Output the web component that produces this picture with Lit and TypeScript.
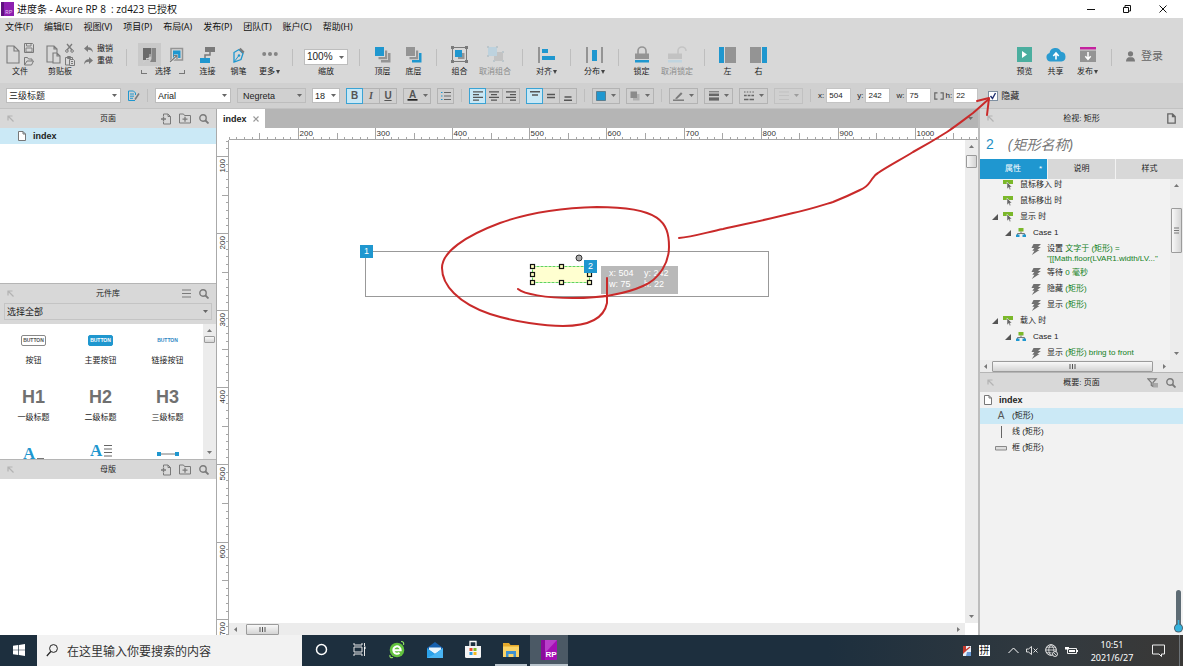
import { LitElement, html, svg, css, TemplateResult } from "lit";
import { customElement, property, state } from "lit/decorators.js";

const icon = (w: number, h: number, body: unknown) =>
  html`<svg class="ico" width=${w} height=${h} viewBox="0 0 ${w} ${h}" aria-hidden="true">${body}</svg>`;

const G = "#7a7a7a";
const M = "#949494";
const B = "#1f97cf";

const icons = {
  file: () => icon(14, 19, svg`<path d="M1 1h7l5 5v12H1z M8 1v5h5" fill="none" stroke=${G} stroke-width="1.1"/>`),
  save: () => icon(10, 10, svg`<path d="M.5 .5h8l1 1v8h-9z" fill="none" stroke=${G}/><path d="M2.500 .5h4.500v2.500h-4.500z M2 5h6v4H2z" fill="none" stroke=${G} stroke-width=".9"/>`),
  open: () => icon(10, 10, svg`<path d="M.5 9V1.500h3l1 1.500H8v2M.5 9 3 5h6.500L7.500 9z" fill="none" stroke=${G}/>`),
  paste: () => icon(15, 19, svg`<path d="M7 17H1V1h7l3 3v4M8 1v3h3M7 8h4l3 3v7H7z M11 8v3h3" fill="none" stroke=${G} stroke-width="1.1"/>`),
  cut: () => icon(9, 10, svg`<path d="M2 1l5 6M7 1 2 7" stroke=${G} stroke-width="1.3"/><circle cx="1.900" cy="8" r="1.300" fill="none" stroke=${G}/><circle cx="7.100" cy="8" r="1.300" fill="none" stroke=${G}/>`),
  copy: () => icon(10, 10, svg`<path d="M4 9H.5V1.500h7V3M2.500 .5h3v2h-3z M4.500 3.500h4l1 1v5h-5z M6 5.500h2M6 7.500h2" fill="none" stroke=${G}/>`),
  undo: () => icon(9, 8, svg`<path d="M0 3.500 4 0v2.200c3 0 4.500 1.500 5 5.300C7.800 5.500 6.500 4.800 4 4.800V7z" fill=${G}/>`),
  redo: () => icon(9, 8, svg`<path d="M9 3.500 5 0v2.200C2 2.200 .5 3.700 0 7.500 1.200 5.500 2.500 4.800 5 4.800V7z" fill=${G}/>`),
  selIntersect: () => icon(15, 16, svg`<path d="M1 1h8v8L6 13H1z" fill="#6a6a6a"/><path d="M9.500 1H14v14H8l1.500-3z" fill="#858585"/><path d="M8 7v4.500H4M8 10l-7 5.500" fill="none" stroke="#cfcfcf" stroke-width="1"/>`),
  selContain: () => icon(15, 16, svg`<path d="M2 1.500h11.500V13H2z" fill="none" stroke=${M} stroke-width="1.500"/><path d="M4 3.500h7.500V11H4z" fill=${B}/><path d="M5 8.500h3v3M8 8.500l-7 7" fill="none" stroke="#ececec" stroke-width="2.200"/><path d="M4.500 8.500h3.500V12M8 8.500 1 15" fill="none" stroke=${G} stroke-width="1.200"/>`),
  connect: () => icon(16, 16, svg`<path d="M5 0h10v5H5z" fill=${G}/><path d="M0 11h10v5H0z" fill=${B}/><path d="M10 5v3H5v3" fill="none" stroke=${G} stroke-width="1.500"/>`),
  pen: () => icon(13, 16, svg`<path d="M2 5.500 7 2.500l4 4-2 6-7 2.500z" fill="none" stroke=${B} stroke-width="1.300"/><path d="M7 2.500 8.500 .8l4 4L11 6.500z" fill=${G}/><path d="M2 15l4.500-6" stroke=${B}/><circle cx="7" cy="8.500" r="1.200" fill=${B}/>`),
  more: () => icon(16, 16, svg`<circle cx="2.200" cy="7" r="2" fill="#858585"/><circle cx="8" cy="7" r="2" fill="#858585"/><circle cx="13.800" cy="7" r="2" fill="#858585"/>`),
  front: () => icon(16, 16, svg`<path d="M13 6v7H6v2.500h9.500V6z" fill=${M}/><path d="M10 3.500V10H3.500v2.200h8.700V3.500z" fill=${M}/><path d="M0 0h9v9H0z" fill=${B}/>`),
  back: () => icon(16, 16, svg`<path d="M13 6v7H6v2.500h9.500V6z" fill=${B}/><path d="M10 3.500V10H3.500v2.200h8.700V3.500z" fill=${M}/><path d="M0 0h9v9H0z" fill=${M}/>`),
  group: () => icon(17, 17, svg`<path d="M1.500 1.500h14v14h-14z" fill="none" stroke=${G}/><path d="M8 7h5.500v6H7V8z" fill=${M}/><path d="M4 4h7v7H4z" fill=${B}/><path d="M0 0h3v3H0zM14 0h3v3h-3zM0 14h3v3H0zM14 14h3v3h-3z" fill=${G}/>`),
  ungroup: () => icon(17, 17, svg`<path d="M7 6h9v9H7z" fill="#c3c3c3"/><path d="M1 1h9v9H1z" fill="#bdd2de"/><path d="M0 0h2v2H0zM9 0h2v2H9zM0 9h2v2H0zM15 5h2v2h-2zM15 14h2v2h-2zM6 14h2v2H6z" fill="#bcc6cb"/>`),
  alignT: () => icon(17, 16, svg`<path d="M0 0h2v16H0z" fill=${M}/><path d="M4 2h6v4H4zM4 9h13v4H4z" fill=${B}/>`),
  distribute: () => icon(17, 16, svg`<path d="M0 0h2v16H0zM15 0h2v16h-2z" fill=${M}/><path d="M6 3h5v11H6z" fill=${B}/>`),
  lock: () => icon(14, 17, svg`<path d="M3 8V5a4 4 0 0 1 8 0v3" fill="none" stroke=${M} stroke-width="1.600"/><path d="M0 7.500h14V13H0z" fill=${M}/><path d="M0 14h14v2.500H0z" fill=${B}/>`),
  unlock: () => icon(19, 17, svg`<path d="M10 8V5a4 4 0 0 1 8 0" fill="none" stroke="#c4c4c4" stroke-width="1.600"/><path d="M0 7.500h14V13H0z" fill="#c2c2c2"/><path d="M0 14h14v2.500H0z" fill="#c0d4df"/>`),
  paneL: () => icon(17, 16, svg`<path d="M0 0h5v16H0z" fill=${B}/><path d="M6 0h11v16H6z" fill=${M}/>`),
  paneR: () => icon(17, 16, svg`<path d="M12 0h5v16h-5z" fill=${B}/><path d="M0 0h11v16H0z" fill=${M}/>`),
  preview: () => icon(15, 15, svg`<path d="M0 0h15v15H0z" fill="#4bae9f"/><path d="M5 4v7l5-3.500z" fill="#fff"/>`),
  share: () => icon(20, 15, svg`<path d="M4.500 14.500a4.300 4.300 0 0 1-1-8.400 6 6 0 0 1 11.500-1.300 4.900 4.900 0 0 1 .5 9.700z" fill="#2a9bd0"/><path d="M10 12.500V6.500M7.300 9 10 6l2.700 3" fill="none" stroke="#fff" stroke-width="1.600"/>`),
  publish: () => icon(16, 15, svg`<path d="M0 0h16v2.500H0z" fill="#c4229f"/><path d="M0 3.500h16V15H0z" fill=${M}/><path d="M8 5v7M5.300 9.300 8 12.300l2.700-3" fill="none" stroke="#fff" stroke-width="1.500"/>`),
  person: () => icon(9, 11, svg`<circle cx="4.500" cy="2.800" r="2.600" fill=${G}/><path d="M0 10.500C0 7.500 1.500 6.500 2.500 6.200h4C7.500 6.500 9 7.500 9 10.500z" fill=${G}/>`),
  styleEdit: () => icon(13, 12, svg`<path d="M1.500 1h5l2 2v2M1.500 1v9.500H8" fill="none" stroke=${B}/><path d="M3 4h4M3 6.200h4M3 8.300h3" stroke=${B}/><path d="M12 3.500 8 9.500" stroke=${G} stroke-width="1.500"/>`),
  fontColor: () => icon(11, 11, svg`<text x="5.500" y="8" text-anchor="middle" font-size="10" font-weight="bold" fill="#555">A</text><path d="M.5 9h10v1.700H.5z" fill="#222"/>`),
  bullets: () => icon(10, 8, svg`<path d="M0 .5h1.500M0 4h1.500M0 7.500h1.500" stroke=${B} stroke-width="1.200"/><path d="M3 .5h7M3 4h7M3 7.500h7" stroke="#666"/>`),
  hL: () => icon(10, 10, svg`<path d="M0 .8h10M0 3.600h6M0 6.400h10M0 9.200h6" stroke="#555" stroke-width="1.300"/>`),
  hC: () => icon(10, 10, svg`<path d="M0 .8h10M2 3.600h6M0 6.400h10M2 9.200h6" stroke="#555" stroke-width="1.300"/>`),
  hR: () => icon(10, 10, svg`<path d="M0 .8h10M4 3.600h6M0 6.400h10M4 9.200h6" stroke="#555" stroke-width="1.300"/>`),
  vT: () => icon(10, 10, svg`<path d="M0 .8h10M2 4h6" stroke="#555" stroke-width="1.400"/>`),
  vM: () => icon(10, 10, svg`<path d="M1 3.500h8M1 6.500h8" stroke="#555" stroke-width="1.400"/>`),
  vB: () => icon(10, 10, svg`<path d="M1.500 6h7M1 9.200h8" stroke="#555" stroke-width="1.400"/>`),
  fill: () => icon(10, 10, svg`<path d="M.5 .5h9v9h-9z" fill=${B} stroke="#5b7f91"/>`),
  shadow: () => icon(10, 10, svg`<path d="M3 3h6.500v6.500H3z" fill="#b0b0b0"/><path d="M.5 .5h6.500v6.500H.5z" fill="#8b8b8b"/>`),
  line: () => icon(11, 10, svg`<path d="M2 7.500 8 1.200 9.500 2.700 4 8z" fill=${G}/><path d="M0 9.200h11" stroke=${G} stroke-width="1.500"/>`),
  weight: () => icon(10, 10, svg`<path d="M0 .8h10" stroke="#666"/><path d="M0 3.800h10" stroke="#666" stroke-width="2.500"/><path d="M0 8h10" stroke="#666" stroke-width="3.200"/>`),
  dash: () => icon(10, 10, svg`<path d="M0 1h10" stroke="#666" stroke-dasharray="1.500 1.300"/><path d="M0 4.500h10" stroke="#666" stroke-width="1.400" stroke-dasharray="2.700 1"/><path d="M0 8.500h10" stroke="#666" stroke-width="1.500" stroke-dasharray="4.500 1"/>`),
  arrows: () => icon(10, 10, svg`<path d="M0 1h10M0 4.500h10M0 8.500h10" stroke="#b5b5b5"/>`),
  lockRatio: () => icon(10, 8, svg`<path d="M3.500 .8H.8v6.400h2.700M6.500 .8h2.700v6.400H6.500" fill="none" stroke="#666" stroke-width="1.200"/>`),
  pin: () => icon(7, 7, svg`<path d="M1 5.500V1h4.500M1 1l5.500 5.500" fill="none" stroke="#b3b3b3" stroke-width="1.200"/>`),
  addPage: () => icon(10, 12, svg`<path d="M2.500 3V1h4.500l2.500 2.500V11H2.500V9M7 1v2.500h2.500" fill="none" stroke=${G}/><path d="M0 6h5M2.500 3.500v5" stroke=${G} stroke-width="1.300"/>`),
  addFolder: () => icon(12, 11, svg`<path d="M.5 1h4l1 1.500h6V10H.5z" fill="none" stroke=${G}/><path d="M3.500 6.200h5M6 3.700v5" stroke=${G} stroke-width="1.300"/>`),
  search: () => icon(10, 10, svg`<circle cx="4" cy="4" r="3.200" fill="none" stroke=${G} stroke-width="1.400"/><path d="M6.500 6.500 9.500 9.500" stroke=${G} stroke-width="1.800"/>`),
  menu: () => icon(9, 9, svg`<path d="M0 1h9M0 4.500h9M0 8h9" stroke=${G} stroke-width="1.200"/>`),
  page: () => icon(8, 10, svg`<path d="M.5 .5h4.500l2.500 2.500v6.500h-7z M5 .5V3h2.500" fill="#fff" stroke="#777"/>`),
  pageTool: () => icon(9, 11, svg`<path d="M.8 .8h4.700l2.700 2.700v6.700H.8z M5.500 .8v2.700h2.700" fill="none" stroke="#666" stroke-width="1.300"/>`),
  filter: () => icon(11, 10, svg`<path d="M.8 .8h8.400L6 4.500V8.500L4.300 7.500v-3z" fill="none" stroke=${G} stroke-width="1.200"/><path d="M8 5v4.500M10 5v4.500" stroke=${G}/>`),
  tri: () => icon(6, 6, svg`<path d="M6 0v6H0z" fill="#555"/>`),
  event: () => icon(10, 10, svg`<path d="M0 0h10v4H0z" fill="#7bb82a"/><path d="M4 2v7l1.700-1.500 1 2.300 1.200-.5-1-2.300H9z" fill="#666" stroke="#f2f2f2" stroke-width=".5"/>`),
  case: () => icon(10, 10, svg`<path d="M2.500 0h5v3.500h-5z" fill="#7bb82a"/><path d="M5 3.500v2M1.500 7V5.500h7V7" fill="none" stroke="#777"/><path d="M0 6.500h3.500V9H0zM6.500 6.500H10V9H6.500z" fill=${B}/>`),
  bolt: () => icon(10, 11, svg`<path d="M2.500 0H10L7 3h2.800L6.300 6h2.200L.8 11l2.700-4.300H1.300L3.300 4H.5z" fill="#707070"/>`),
};

const caret = () => icon(5, 3, svg`<path d="M0 0h5L2.500 3z" fill="#6b6b6b"/>`);
const arrow = (d: "u" | "d" | "l" | "r") =>
  icon(5, 5, svg`<path d=${{ u: "M0 4h5L2.500 1z", d: "M0 1h5L2.500 4z", l: "M4 0v5L1 2.500z", r: "M1 0v5l3-2.500z" }[d]} fill="#777"/>`);

/** Ruler of the drawing canvas: one labelled mark for each hundred units. */
@customElement("canvas-ruler")
export class CanvasRuler extends LitElement {
  @property({ type: Boolean }) vertical = false;
  @property({ type: Number }) origin = 0;
  @property({ type: Number }) from = 0;
  @state() private extent = 0;

  private watcher = new ResizeObserver(() => {
    this.extent = this.vertical ? this.clientHeight : this.clientWidth;
  });

  connectedCallback() {
    super.connectedCallback();
    this.watcher.observe(this);
  }

  disconnectedCallback() {
    this.watcher.disconnect();
    super.disconnectedCallback();
  }

  static styles = css`
    :host { display: block; overflow: hidden; background: #fff; min-width: 0; min-height: 0; }
    svg { display: block; width: 100%; height: 100%; font: 8px "Liberation Sans", Arial, sans-serif; }
    line { stroke: #a6a6a6; }
    text { fill: #333; }
  `;

  render() {
    const step = 7.71;
    const start = this.vertical ? 0 : 12;
    const out: unknown[] = [];
    for (let i = -20; this.origin + i * step < this.extent; i++) {
      const p = Math.round(this.origin + i * step) + 0.5;
      if (p < start) continue;
      const mod = ((i % 10) + 10) % 10;
      const len = mod === 0 ? 12 : mod === 5 ? 7 : 3;
      out.push(this.vertical
        ? svg`<line x1=${12 - len} x2="12" y1=${p} y2=${p}></line>`
        : svg`<line y1=${12 - len} y2="12" x1=${p} x2=${p}></line>`);
      if (mod === 0 && i >= 0) {
        const label = this.from + i * 10;
        out.push(this.vertical
          ? svg`<text transform="translate(8 ${p + 16}) rotate(-90)">${label}</text>`
          : svg`<text x=${p + 1} y="8">${label}</text>`);
      }
    }
    return html`<svg>${out}${this.vertical
      ? svg`<line x1="11.500" x2="11.500" y1="0" y2=${this.extent}></line>`
      : svg`<line y1="11.500" y2="11.500" x1="12" x2=${this.extent}></line>`}</svg>`;
  }
}

@customElement("app-root")
export class AppRoot extends LitElement {
  static styles = css`
    :host {
      display: flex; flex-direction: column; position: relative; height: 100vh; overflow: hidden;
      font: 8px/12px "Liberation Sans", "Noto Sans CJK SC", sans-serif; color: #222; background: #d8d8d8;
    }
    * { box-sizing: border-box; }
    button, input, select { font: inherit; color: inherit; margin: 0; padding: 0; border: 0; background: none; border-radius: 0; }
    button { display: flex; align-items: center; justify-content: center; }
    .ico { display: block; flex: none; }
    .grow { flex: 1; }

    .title { display: flex; align-items: center; height: 18px; flex: none; background: #fff; padding: 0 2px 0 1px; color: #111; font: 10px/18px "Open Sans", "Noto Sans CJK SC", sans-serif; white-space: pre; }
    .title h1 { font: inherit; margin: 0 0 0 3px; flex: 1; }
    .title .win { width: 36px; height: 18px; }
    .menu { display: flex; height: 18px; flex: none; align-items: center; gap: 11px; padding-left: 5px; font: 9px/18px "Noto Sans", "Noto Sans CJK SC", sans-serif; color: #111; }

    .tools { display: flex; height: 47px; flex: none; align-items: flex-start; padding-top: 7px; }
    .sep { width: 1px; height: 17px; background: #bebebe; margin: 6px 7px 0; flex: none; }
    .tool { display: flex; flex-direction: column; align-items: center; justify-content: flex-start; width: 31px; flex: none; white-space: nowrap; color: #222; }
    .tool.wide { width: 40px; }
    .tool.mid { width: 33px; }
    .tool .art { display: flex; height: 23px; align-items: center; justify-content: center; }
    .tool .cap { display: flex; align-items: center; gap: 1px; line-height: 12px; }
    .off { color: #8a8a8a; }
    .pair { display: flex; gap: 4px; align-items: center; }
    .stack { display: flex; flex-direction: column; gap: 3px; }
    .files { display: flex; width: 119px; flex: none; }
    .files > .tool { width: 40px; }
    .hist { display: flex; flex-direction: column; padding-left: 4px; }
    .hist button { gap: 4px; height: 12px; }
    .selectors { display: flex; flex-direction: column; width: 58px; flex: none; align-items: center; }
    .modes { display: flex; gap: 4px; }
    .modes button { width: 23px; height: 23px; }
    .modes .on { background: #c9c9c9; }
    .brk { display: flex; align-items: center; gap: 8px; }
    .brk i { width: 6px; height: 4px; border: solid #777; border-width: 0 0 1px 1px; }
    .brk i:last-child { border-width: 0 1px 1px 0; }
    .zoom { display: flex; flex-direction: column; align-items: center; width: 52px; flex: none; gap: 1px; padding-top: 6px; }
    .zoom select { width: 44px; height: 16px; font-size: 10px; }
    select {
      appearance: none; background: #fff url("data:image/svg+xml,%3Csvg xmlns='http://www.w3.org/2000/svg' width='5' height='3'%3E%3Cpath d='M0 0h5L2.500 3z' fill='%23666'/%3E%3C/svg%3E") no-repeat right 3px center;
      border: 1px solid #bdbdbd; padding: 0 10px 0 2px; height: 15px;
    }
    .login { gap: 6px; font-size: 11px; color: #666; padding: 7px 20px 0 7px; }

    .format { display: flex; height: 25px; flex: none; align-items: center; gap: 6px; padding-left: 6px; background: #d0d0d0; font-size: 9px; }
    .format > * { flex: none; }
    .format .sep { height: 13px; margin: 0 1px; }
    .format .s1 { width: 115px; }
    .format .s2 { width: 76px; }
    .format .s3 { width: 69px; background-color: #d0d0d0; padding-left: 5px; }
    .format .s4 { width: 28px; }
    .seg { display: flex; }
    .seg button, .fb { width: 17px; height: 16px; border: 1px solid #b3b3b3; }
    .seg button + button { border-left: 0; }
    .seg button.on { background: #c8e8f6; border: 1px solid #3aa3d4; }
    .fb.drop { width: 28px; gap: 5px; }
    .fb.long { width: 29px; gap: 5px; }
    .fb:disabled { opacity: .5; }
    .b { font-weight: bold; font-size: 10px; color: #555; }
    .i { font: italic bold 10px "Liberation Serif", serif; color: #555; }
    .u { text-decoration: underline; font-weight: bold; font-size: 10px; color: #555; }
    .field { display: flex; align-items: center; gap: 2px; font-size: 8px; }
    .field.ratio { gap: 1px; margin-left: -3px; }
    .field input { width: 25px; height: 15px; background: #fff; border: 1px solid #c4c4c4; padding-left: 2px; }
    .hide { display: flex; align-items: center; gap: 3px; padding-left: 4px; }
    .hide input { appearance: none; width: 10px; height: 10px; border: 1px solid #7f8fa0; background: #fff url("data:image/svg+xml,%3Csvg xmlns='http://www.w3.org/2000/svg' width='8' height='8'%3E%3Cpath d='M1.500 4l2 2.500L6.500 1' fill='none' stroke='%23203070' stroke-width='1.400'/%3E%3C/svg%3E") no-repeat center; }

    main { display: grid; grid-template-columns: 216px minmax(0, 1fr) 205px; flex: 1; min-height: 0; border-top: 1px solid #c2c2c2; }
    .left, .right { display: flex; flex-direction: column; min-height: 0; background: #fff; }
    .right { background: #f2f2f2; border-left: 2px solid #bdbdbd; }
    .ph { display: grid; grid-template-columns: 48px 1fr 48px; align-items: center; height: 19px; flex: none; background: #d8d8d8; padding: 0 7px; }
    .ph h2 { margin: 0; font: inherit; text-align: center; }
    .ph .acts { display: flex; gap: 8px; justify-content: flex-end; align-items: center; }
    .ph.top { border-top: 1px solid #b5b5b5; height: 20px; }
    .row { display: flex; align-items: center; height: 16px; gap: 7px; flex: none; white-space: nowrap; }
    .row.sel { background: #cbe9f6; }
    .row b { font-size: 9px; }
    .pages { height: 155px; flex: none; }
    .pages .row { padding-left: 18px; }
    .lib { background: #d8d8d8; padding: 0 4px 4px; flex: none; }
    .lib select { width: 100%; height: 17px; background-color: #d8d8d8; font-size: 9px; border-color: #c4c4c4; }
    .kit { display: flex; height: 135px; flex: none; min-height: 0; }
    .kit ul { display: grid; grid-template-columns: repeat(3, 1fr); grid-auto-rows: 57px; flex: 1; list-style: none; margin: 0; padding: 4px 2px 0 0; overflow: hidden; }
    .kit li { display: flex; flex-direction: column; align-items: center; }
    .kit .pic { display: flex; height: 24px; align-items: center; justify-content: center; flex: none; }
    .kit .pic.high { height: 18px; }
    .kit .cap { padding-top: 3px; }
    .btn { font-weight: bold; font-size: 5px; line-height: 9px; border: 1px solid #888; border-radius: 2px; padding: 0 1px; color: #555; }
    .btn.prime { background: #1f97cf; border-color: #1f97cf; color: #fff; }
    .btn.link { border-color: transparent; color: #2f86c4; }
    .h { font-weight: bold; font-size: 18px; color: #707070; }
    .letter { font: bold 17px "Liberation Serif", "Times New Roman", serif; }

    .vbar { display: flex; flex-direction: column; align-items: center; justify-content: space-between; width: 13px; flex: none; background: #ececec; padding: 4px 0; }
    .vbar .head, .hbar .head { display: flex; align-items: center; }
    .vbar .head { flex-direction: column; gap: 3px; }
    .vbar .head.low { gap: 6px; }
    .vbar .head.deep { gap: 20px; }
    .hbar { display: flex; align-items: center; justify-content: space-between; height: 12px; flex: none; background: #ececec; padding: 0 4px; }
    .hbar .head { gap: 8px; }
    .hbar.inset { padding: 0 16px 0 3px; }
    .hbar.inset .head { gap: 4px; }
    .thumb { display: flex; align-items: center; justify-content: center; background: linear-gradient(#f8f8f8, #d4d4d4); border: 1px solid #9b9b9b; border-radius: 1px; width: 11px; }
    .thumb.side { background: linear-gradient(90deg, #f8f8f8, #d4d4d4); }
    .thumb.t7 { height: 7px; } .thumb.t13 { height: 13px; } .thumb.t45 { height: 45px; }
    .thumb.w33 { width: 33px; height: 11px; } .thumb.w160 { width: 161px; height: 11px; }

    .center { display: grid; grid-template-columns: 12px minmax(0, 1fr) 13px; grid-template-rows: 19px 12px minmax(0, 1fr) 12px; border-left: 1px solid #aaa; min-height: 0; background: #fff; }
    .tabs { grid-column: 1 / -1; display: flex; background: #b5b5b5; align-items: center; justify-content: space-between; padding-right: 5px; }
    .tabs .tab { display: flex; align-items: center; gap: 6px; height: 19px; padding: 0 6px; background: #fff; font-size: 9px; }
    .rh { grid-column: 1 / -1; }
    .rv { grid-row: 3 / 5; }
    .canvas { position: relative; overflow: hidden; background: #fff; font-size: 9px; line-height: 11px; }
    .canvas > * { position: absolute; }
    .frame { left: 136px; top: 111px; width: 404px; height: 46px; border: 1px solid #999; }
    .pick { left: 302px; top: 125px; overflow: visible; }
    .note { width: 13px; height: 13px; background: #1f97cf; color: #fff; font-size: 9px; line-height: 13px; text-align: center; }
    .n1 { left: 131px; top: 105px; } .n2 { left: 355px; top: 120px; }
    .tip { left: 372px; top: 126px; width: 77px; height: 28px; padding: 2px 8px; background: #b9b9b9; color: #fff; display: grid; grid-template-columns: 35px 1fr; grid-auto-rows: 11px; white-space: nowrap; }

    .name { display: flex; align-items: center; height: 31px; flex: none; background: #fff; padding-left: 6px; gap: 14px; font-size: 14px; color: #1f8fc4; }
    .name input { font-style: italic; color: #777; width: 120px; font-size: 14px; }
    .ptabs { display: grid; grid-template-columns: repeat(3, 1fr); gap: 1px; height: 20px; flex: none; background: #f2f2f2; }
    .ptabs button { background: #d8d8d8; gap: 18px; }
    .ptabs .on { background: #1f97d0; color: #fff; padding-left: 20px; }
    .tree { display: flex; height: 181px; flex: none; overflow: hidden; }
    .list { flex: 1; min-width: 0; overflow: hidden; display: flex; flex-direction: column; margin-top: -2px; }
    .list .row { gap: 7px; }
    .ev { padding-left: 12px; } .ev .ico + .ico { margin-left: -2px; }
    .ev.leaf { padding-left: 23px; }
    .cs { padding-left: 25px; } .cs .ico + .ico { margin-left: -2px; }
    .row.ac { padding-left: 51px; gap: 6px; align-items: center; }
    .row.two { height: 24px; align-items: flex-start; line-height: 10px; padding-top: 3px; }
    .g { color: #11801b; }
    .outline .row { padding-left: 15px; gap: 5px; }
    .outline .row.root { padding-left: 4px; gap: 7px; }
    .glyph { width: 12px; display: flex; justify-content: center; font-size: 10px; color: #555; }

    .taskbar { display: flex; height: 31px; flex: none; background: linear-gradient(90deg, #1d2f3e 0%, #1d2f3e 70%, #333a3f 90%, #3a3836 100%); color: #fff; align-items: stretch; }
    .taskbar button { width: 38px; flex: none; border-bottom: 2px solid transparent; }
    .taskbar button.start { width: 37px; }
    .taskbar button.run { border-color: #b9c4cc; width: 32px; margin: 0 3px; }
    .taskbar button.now { background: #4b5965; border-color: #b9c4cc; }
    .find { display: flex; align-items: center; gap: 9px; width: 265px; flex: none; background: #f2f2f2; padding-left: 9px; }
    .find input { flex: 1; min-width: 0; font: 12px/20px "Noto Sans CJK SC", sans-serif; }
    .find input::placeholder { color: #333; opacity: 1; }
    .tray { display: flex; align-items: center; gap: 7px; padding-right: 3px; }
    .ime { width: 11px; height: 11px; background: #fff; color: #111; line-height: 11px; font-size: 10px; text-align: center; margin-right: 11px; }
    .clock { font: 9px/13px "Noto Sans", sans-serif; text-align: center; width: 54px; margin-right: 6px; }
    .edge { width: 1px; align-self: stretch; background: #6c7277; margin-left: 7px; }
    .ink { position: absolute; left: 0; top: 0; width: 100%; height: 100%; pointer-events: none; }
    .gauge { position: absolute; right: 0; bottom: 32px; }
  `;

  private tool(art: TemplateResult, cap: string, cls = "", drop = false) {
    return html`<button class="tool ${cls}"><span class="art">${art}</span><span class="cap">${cap}${drop ? icon(4, 4, svg`<path d="M0 0h4L2 4z" fill="#444"/>`) : ""}</span></button>`;
  }

  private head(title: string, acts: unknown, cls = "") {
    return html`<header class="ph ${cls}">${icons.pin()}<h2>${title}</h2><div class="acts">${acts}</div></header>`;
  }

  private grip(vertical = false) {
    return vertical
      ? icon(5, 7, svg`<path d="M0 1h5M0 3.500h5M0 6h5" stroke="#777"/>`)
      : icon(7, 5, svg`<path d="M1 0v5M3.500 0v5M6 0v5" stroke="#555"/>`);
  }

  private handles() {
    const pts = [[0, 0], [29, 0], [0, 8], [57, 8], [0, 16], [29, 16], [57, 16]];
    return html`<svg class="pick" width="60" height="20" viewBox="0 0 60 20">
      <path d="M1.500 1.500h57v16h-57z" fill="#ffffd0" stroke="#5fd35f" stroke-dasharray="3 1"/>
      ${pts.map(([x, y]) => svg`<rect x=${x - 0.5} y=${y - 0.5} width="4" height="4" fill="#ffffc0" stroke="#111" stroke-width="1.200"/>`)}
      <circle cx="48" cy="-7" r="3" fill="#aaa" stroke="#333"/>
    </svg>`;
  }

  render() {
    const menu = ["文件(F)", "编辑(E)", "视图(V)", "项目(P)", "布局(A)", "发布(P)", "团队(T)", "账户(C)", "帮助(H)"];
    const addActs = html`${icons.addPage()}${icons.addFolder()}${icons.search()}`;
    const sep = html`<span class="sep"></span>`;
    return html`
      <header class="title">
        ${icon(13, 14, svg`<rect width="13" height="14" fill="#8c1fb0"/><rect width="3" height="14" fill="#5f1280"/><text x="4" y="12" font-size="6" fill="#e9c8f5">RP</text>`)}
        <h1>进度条 - Axure RP 8  : zd423 已授权</h1>
        <button class="win" aria-label="最小化">${icon(8, 8, svg`<path d="M0 4.500h8" stroke="#111"/>`)}</button>
        <button class="win" aria-label="还原">${icon(8, 8, svg`<path d="M.5 2.500h5v5h-5zM2 2V.5h5.500V6H6" fill="none" stroke="#111"/>`)}</button>
        <button class="win" aria-label="关闭">${icon(8, 8, svg`<path d="M.5 .5l7 7M7.500 .5l-7 7" stroke="#111"/>`)}</button>
      </header>
      <nav class="menu">${menu.map((m) => html`<button>${m}</button>`)}</nav>

      <section class="tools">
        <div class="files">
          ${this.tool(html`<span class="pair">${icons.file()}<span class="stack">${icons.save()}${icons.open()}</span></span>`, "文件")}
          ${this.tool(html`<span class="pair">${icons.paste()}<span class="stack">${icons.cut()}${icons.copy()}</span></span>`, "剪贴板")}
          <div class="hist"><button>${icons.undo()}撤销</button><button>${icons.redo()}重做</button></div>
        </div>
        ${sep}
        <div class="selectors">
          <div class="modes"><button class="on" aria-label="相交选中">${icons.selIntersect()}</button><button aria-label="包含选中">${icons.selContain()}</button></div>
          <div class="brk"><i></i>选择<i></i></div>
        </div>
        ${this.tool(icons.connect(), "连接")}${this.tool(icons.pen(), "钢笔")}${this.tool(icons.more(), "更多", "", true)}
        ${sep}
        <label class="zoom"><select><option>100%</option></select><span>缩放</span></label>
        ${sep}
        ${this.tool(icons.front(), "顶层")}${this.tool(icons.back(), "底层")}
        ${sep}
        ${this.tool(icons.group(), "组合")}${this.tool(icons.ungroup(), "取消组合", "wide off")}
        ${sep}
        ${this.tool(icons.alignT(), "对齐", "mid", true)}
        ${sep}
        ${this.tool(icons.distribute(), "分布", "mid", true)}
        ${sep}
        ${this.tool(icons.lock(), "锁定")}${this.tool(icons.unlock(), "取消锁定", "wide off")}
        ${sep}
        ${this.tool(icons.paneL(), "左")}${this.tool(icons.paneR(), "右")}
        <span class="grow"></span>
        ${this.tool(icons.preview(), "预览")}${this.tool(icons.share(), "共享")}${this.tool(icons.publish(), "发布", "mid", true)}
        ${sep}
        <button class="login">${icons.person()}登录</button>
      </section>

      <section class="format">
        <select class="s1" aria-label="样式"><option>三级标题</option></select>
        ${icons.styleEdit()}${sep}
        <select class="s2" aria-label="字体"><option>Arial</option></select>
        <select class="s3" aria-label="字型"><option>Negreta</option></select>
        <select class="s4" aria-label="字号"><option>18</option></select>
        <div class="seg"><button class="on b">B</button><button class="i">I</button><button class="u">U</button></div>
        <button class="fb drop" aria-label="文字颜色">${icons.fontColor()}${caret()}</button>
        <button class="fb" aria-label="列表">${icons.bullets()}</button>
        ${sep}
        <div class="seg"><button class="on" aria-label="左对齐">${icons.hL()}</button><button aria-label="居中">${icons.hC()}</button><button aria-label="右对齐">${icons.hR()}</button></div>
        <div class="seg"><button class="on" aria-label="顶部">${icons.vT()}</button><button aria-label="中部">${icons.vM()}</button><button aria-label="底部">${icons.vB()}</button></div>
        ${sep}
        <button class="fb drop" aria-label="填充">${icons.fill()}${caret()}</button>
        <button class="fb drop" aria-label="阴影">${icons.shadow()}${caret()}</button>
        ${sep}
        <button class="fb long" aria-label="线条颜色">${icons.line()}${caret()}</button>
        <button class="fb long" aria-label="线宽">${icons.weight()}${caret()}</button>
        <button class="fb long" aria-label="线型">${icons.dash()}${caret()}</button>
        <button class="fb long" aria-label="箭头" disabled>${icons.arrows()}${caret()}</button>
        ${sep}
        <label class="field">x: <input .value=${"504"} /></label>
        <label class="field">y: <input .value=${"242"} /></label>
        <label class="field">w: <input .value=${"75"} /></label>
        <label class="field ratio">${icons.lockRatio()}h: <input .value=${"22"} /></label>
        <label class="hide"><input type="checkbox" checked />隐藏</label>
      </section>

      <main>
        <aside class="left">
          ${this.head("页面", addActs)}
          <div class="pages"><div class="row sel">${icons.page()}<b>index</b></div></div>
          ${this.head("元件库", html`${icons.menu()}${icons.search()}`, "top")}
          <div class="lib"><select aria-label="元件库"><option>选择全部</option></select></div>
          <div class="kit">
            <ul>
              <li><span class="pic"><span class="btn">BUTTON</span></span><span class="cap">按钮</span></li>
              <li><span class="pic"><span class="btn prime">BUTTON</span></span><span class="cap">主要按钮</span></li>
              <li><span class="pic"><span class="btn link">BUTTON</span></span><span class="cap">链接按钮</span></li>
              <li><span class="pic h">H1</span><span class="cap">一级标题</span></li>
              <li><span class="pic h">H2</span><span class="cap">二级标题</span></li>
              <li><span class="pic h">H3</span><span class="cap">三级标题</span></li>
              <li><span class="pic high">${icon(22, 18, svg`<text class="letter" x="0" y="17" fill=${B}>A</text><path d="M14 16.500h7" stroke="#777"/>`)}</span></li>
              <li><span class="pic high">${icon(22, 18, svg`<text class="letter" x="0" y="14" fill=${B}>A</text><path d="M14 3.500h8M14 7h8M14 10.500h8M14 14h8" stroke="#666"/>`)}</span></li>
              <li><span class="pic high">${icon(22, 18, svg`<path d="M2 12h18" stroke="#777"/><path d="M0 10h4v4H0zM18 10h4v4h-4z" fill=${B}/>`)}</span></li>
            </ul>
            <div class="vbar"><div class="head">${arrow("u")}<span class="thumb t7"></span></div>${arrow("d")}</div>
          </div>
          ${this.head("母版", addActs, "top")}
        </aside>

        <section class="center">
          <div class="tabs"><div class="tab"><b>index</b>${icon(6, 6, svg`<path d="M.5 .5l5 5M5.500 .5l-5 5" stroke="#999" stroke-width="1.200"/>`)}</div>${caret()}</div>
          <canvas-ruler class="rh" .origin=${81} .from=${200}></canvas-ruler>
          <canvas-ruler class="rv" vertical .origin=${16} .from=${100}></canvas-ruler>
          <div class="canvas">
            <div class="frame"></div>
            ${this.handles()}
            <span class="note n1">1</span><span class="note n2">2</span>
            <div class="tip"><span>x: 504</span><span>y: 242</span><span>w: 75</span><span>h: 22</span></div>
          </div>
          <div class="vbar"><div class="head low">${arrow("u")}<span class="thumb side t13"></span></div>${arrow("d")}</div>
          <div class="hbar"><div class="head">${arrow("l")}<span class="thumb w33">${this.grip()}</span></div>${arrow("r")}</div>
        </section>

        <aside class="right">
          ${this.head("检视: 矩形", icons.pageTool())}
          <label class="name">2<input aria-label="名称" .value=${"(矩形名称)"} /></label>
          <div class="ptabs"><button class="on">属性<span>*</span></button><button>说明</button><button>样式</button></div>
          <div class="tree">
            <div class="list">
              <div class="row ev leaf">${icons.event()}鼠标移入 时</div>
              <div class="row ev leaf">${icons.event()}鼠标移出 时</div>
              <div class="row ev">${icons.tri()}${icons.event()}显示 时</div>
              <div class="row cs">${icons.tri()}${icons.case()}Case 1</div>
              <div class="row ac two">${icons.bolt()}<span>设置 <span class="g">文字于 (矩形) =<br />"[[Math.floor(LVAR1.width/LV..."</span></span></div>
              <div class="row ac">${icons.bolt()}<span>等待 <span class="g">0 毫秒</span></span></div>
              <div class="row ac">${icons.bolt()}<span>隐藏 <span class="g">(矩形)</span></span></div>
              <div class="row ac">${icons.bolt()}<span>显示 <span class="g">(矩形)</span></span></div>
              <div class="row ev">${icons.tri()}${icons.event()}载入 时</div>
              <div class="row cs">${icons.tri()}${icons.case()}Case 1</div>
              <div class="row ac">${icons.bolt()}<span>显示 <span class="g">(矩形) bring to front</span></span></div>
            </div>
            <div class="vbar"><div class="head deep">${arrow("u")}<span class="thumb side t45">${this.grip(true)}</span></div>${arrow("d")}</div>
          </div>
          <div class="hbar inset"><div class="head">${arrow("l")}<span class="thumb w160">${this.grip()}</span></div>${arrow("r")}</div>
          ${this.head("概要: 页面", html`${icons.filter()}${icons.search()}`, "top")}
          <div class="outline">
            <div class="row root">${icons.page()}<b>index</b></div>
            <div class="row sel"><span class="glyph">A</span>(矩形)</div>
            <div class="row"><span class="glyph">${icon(1, 12, svg`<path d="M.5 0v12" stroke="#666"/>`)}</span>线 (矩形)</div>
            <div class="row"><span class="glyph">${icon(12, 5, svg`<path d="M.5 .5h11v3.500H.5z" fill="#ddd" stroke="#888"/>`)}</span>框 (矩形)</div>
          </div>
        </aside>
      </main>

      <footer class="taskbar">
        <button class="start" aria-label="开始">${icon(12, 12, svg`<path d="M0 1.700 5.300 1v4.700H0zM6 .9 12 0v5.700H6zM0 6.300h5.300V11L0 10.300zM6 6.300h6V12l-6-.9z" fill="#fff"/>`)}</button>
        <label class="find">${icon(12, 13, svg`<circle cx="7.500" cy="4.500" r="3.900" fill="none" stroke="#222"/><path d="M4.800 7.500.8 12" stroke="#222" stroke-width="1.200"/>`)}<input aria-label="搜索" placeholder="在这里输入你要搜索的内容" /></label>
        <button aria-label="Cortana">${icon(13, 13, svg`<circle cx="6.500" cy="6.500" r="5" fill="none" stroke="#fff" stroke-width="1.500"/>`)}</button>
        <button aria-label="任务视图">${icon(13, 13, svg`<path d="M1 0v2h8V0M1 4h8v5H1zM1 13v-2h8v2M11.500 0v3M11.500 6v7" fill="none" stroke="#e8e8e8"/><path d="M11 3.500h1.500V6H11z" fill="#fff"/>`)}</button>
        <button aria-label="浏览器">${icon(18, 19, svg`<circle cx="9" cy="10" r="7.300" fill="#62c13e"/><path d="M5.500 10.200h7.200a3.700 3.700 0 1 0-1.200 2.600" fill="none" stroke="#fff" stroke-width="2"/><path d="M13 1.500c2.500 0 3 1.500 2.500 3.500M2 15c-.5 2 .5 3 3 2.500" fill="none" stroke="#8fe05f" stroke-width="1.200"/>`)}</button>
        <button aria-label="邮件">${icon(18, 18, svg`<path d="M1 7 9 1l8 6v10H1z" fill="#1660ad"/><path d="M3 6.500h12V9l-6 4-6-4z" fill="#eaf6fd"/><path d="M1 7l8 6 8-6v10H1z" fill="#2ba2ea"/><path d="M1 17 9 13l8-6v10z" fill="#49b4f2"/>`)}</button>
        <button aria-label="商店">${icon(18, 19, svg`<path d="M6 6V1.500h6V6" fill="none" stroke="#fff" stroke-width="1.300"/><path d="M1 6h16v10.500a1.500 1.500 0 0 1-1.500 1.500h-13A1.500 1.500 0 0 1 1 16.500z" fill="#f5f5f5"/><path d="M5.500 8h3v3h-3z" fill="#e8492d"/><path d="M9.500 8h3v3h-3z" fill="#7fba2a"/><path d="M5.500 12h3v3h-3z" fill="#2a9ce0"/><path d="M9.500 12h3v3h-3z" fill="#f5b81f"/>`)}</button>
        <button class="run" aria-label="文件资源管理器">${icon(16, 16, svg`<path d="M0 1h6l1.500 2H16v12H0z" fill="#e5a92b"/><path d="M0 4.500h16V15H0z" fill="#fbd467"/><path d="M3 9h10v6h-2.500v-3h-5v3H3z" fill="#3f92d0"/>`)}</button>
        <button class="now" aria-label="Axure RP">${icon(18, 20, svg`<rect x="1" width="16" height="20" rx="1" fill="#a40fb4"/><path d="M1 0h16L6 12 1 8z" fill="#b93fca"/><path d="M1 0h4v20H1z" fill="#8a0a9c"/><text x="5.500" y="17" font-size="8" font-weight="bold" fill="#fff">RP</text>`)}</button>
        <span class="grow"></span>
        <div class="tray">
          ${icon(10, 12, svg`<path d="M1 1h8v10H1z" fill="#e8eef7"/><path d="M1 1h3v5L1 9z" fill="#c53a2e"/><path d="M3 6l5-4" stroke="#c53a2e" stroke-width="1.500"/><path d="M5 7h4v4H4z" fill="#6b9bd6"/>`)}
          <span class="ime">拼</span>
          ${icon(11, 7, svg`<path d="M.5 6 5.500 1l5 5" fill="none" stroke="#fff"/>`)}
          ${icon(12, 9, svg`<path d="M.5 3h2l3-2.500v8L2.500 6h-2z M7.500 2.500l4 4M11.500 2.500l-4 4" fill="none" stroke="#eee" stroke-width=".9"/>`)}
          ${icon(13, 13, svg`<circle cx="6" cy="6" r="5.300" fill="none" stroke="#eee"/><path d="M.7 6h10.600M6 .7C3 3.500 3 8.500 6 11.300M6 .7C9 3.500 9 6 8.500 7M1.500 3.200h9M1.500 8.800h5" fill="none" stroke="#eee" stroke-width=".8"/><circle cx="10" cy="10" r="2.500" fill="#333a3f" stroke="#eee" stroke-width=".9"/><path d="M8.400 8.400l3.200 3.200" stroke="#eee" stroke-width=".8"/>`)}
          ${icon(13, 9, svg`<path d="M2.500 2.500h9v5h-9z" fill="none" stroke="#eee"/><path d="M4 4h6v2H4z M11.500 4H13v2h-1.500z M0 1h4v2.500H0z" fill="#fff"/>`)}
          <span class="clock">10:51<br />2021/6/27</span>
          ${icon(13, 13, svg`<path d="M.5 1h12v9H9.500V12.500L7 10H.5z" fill="none" stroke="#eee"/>`)}
          <span class="edge"></span>
        </div>
      </footer>

      <svg class="gauge" width="10" height="45" viewBox="0 0 10 45" aria-hidden="true"><rect x="3" y="1" width="5" height="38" rx="2.500" fill="#5d6b74"/><circle cx="5.500" cy="39" r="4.500" fill="#46606e"/><circle cx="5.500" cy="39" r="3.500" fill="#35b3dd"/><path d="M5.500 31v6" stroke="#35b3dd" stroke-width="1.500"/></svg>
      <svg class="ink" aria-hidden="true">
        <g fill="none" stroke="#c92a2a" stroke-width="2" stroke-linecap="round" stroke-linejoin="round">
          <path d="M518 289C524 294 545 298 573 298 600 298 625 294 643 286 660 279 669 262 669 247 669 222 660 207 597 207 560 208 525 214 500 223 465 236 442 252 442 268 442 285 458 303 490 314 515 322 545 326 563 326 590 326 604 318 607 303L607 278"/>
          <path d="M679 238C692 237 708 232 723 229 745 224 770 219 793 213 808 210 820 206 833 202 843 198 852 194 860 190 865 188 868 185 870 182 873 178 874 175 878 173 890 165 902 159 913 152 924 146 936 139 947 132 956 126 965 119 973 113 979 108 984 103 989 99"/>
          <path d="M977 101 989 98 987 115"/>
        </g>
      </svg>
    `;
  }
}
